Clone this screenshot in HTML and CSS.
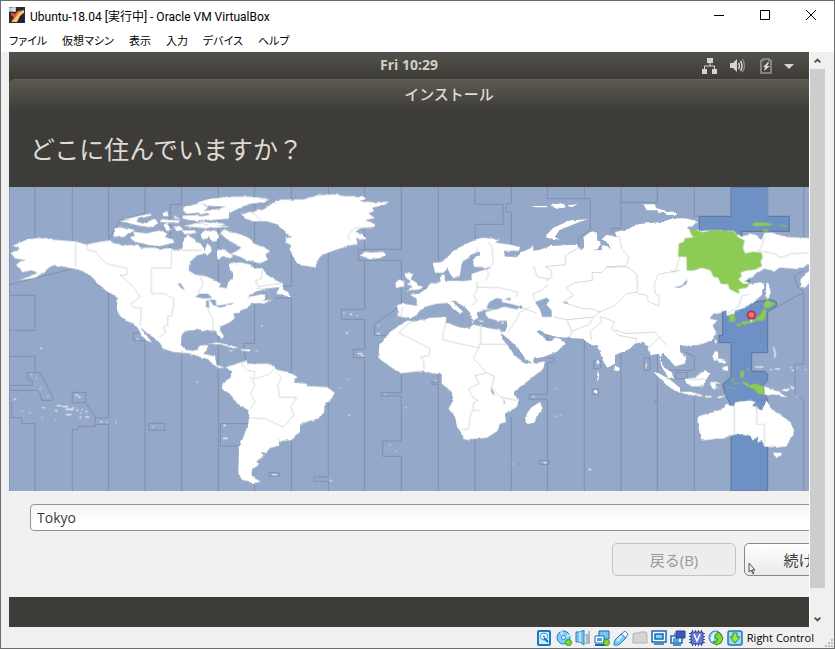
FILE: index.html
```html
<!DOCTYPE html>
<html lang="ja">
<head>
<meta charset="utf-8">
<meta name="viewport" content="width=device-width, initial-scale=1">
<title>Ubuntu-18.04 [実行中] - Oracle VM VirtualBox</title>
<link rel="stylesheet" href="styles.css">
</head>
<body>
<header class="titlebar">
  <svg class="app-icon" viewBox="0 0 16 16" aria-hidden="true"><rect width="16" height="16" fill="#292a38"/><path d="M2 6l4 1 3-3 6-1-3 5-3 1-3 6H2l3-5-3-2z" fill="#df7932"/><path d="M10 6l5-3v3l-4 3-3 6H3l4-5z" fill="#ffc869"/><path d="M12 8l3-2v9h-4z" fill="#202437"/><path d="M2 6l4 1 1 2-2 1-3-2z" fill="#e34c2a"/><path d="M0 0h7v5H0z" fill="#8d99a6"/><path d="M1 1v3m2-3v3m1-3h2v3H4z" stroke="#fff" fill="none"/></svg>
  <h1 class="caption">Ubuntu-18.04 [実行中] - Oracle VM VirtualBox</h1>
  <div class="window-controls">
    <button aria-label="最小化"><svg viewBox="0 0 10 10"><path d="M0 5.500h10"/></svg></button>
    <button aria-label="最大化"><svg viewBox="0 0 10 10"><path d="M.5.5h9v9h-9z"/></svg></button>
    <button aria-label="閉じる"><svg viewBox="0 0 10 10"><path d="M0 0l10 10M10 0L0 10"/></svg></button>
  </div>
</header>
<nav class="menubar">
  <button>ファイル</button><button>仮想マシン</button><button>表示</button><button>入力</button><button>デバイス</button><button>ヘルプ</button>
</nav>
<div class="viewport">
  <main class="guest">
    <div class="topbar">
      <span class="clock">Fri 10:29</span>
      <div class="indicators">
        <svg viewBox="0 0 16 16" aria-hidden="true"><path fill="#d6d4cf" d="M5 0h6v5H5zM0 11h5v5H0zM10 11h5v5h-5z"/><path d="M8 5v3M2.500 11V8h10v3" fill="none" stroke="#d6d4cf"/></svg>
        <svg viewBox="0 0 16 16" aria-hidden="true"><path fill="#d6d4cf" d="M0 5h3l4-4v13l-4-4H0z"/><path fill="none" stroke="#d6d4cf" stroke-width="1.500" d="M8.500 5q2 3 0 6M10.500 3q3 5 0 10"/><path fill="none" stroke="#88867f" stroke-width="1.500" d="M12.500 1q4 7 0 13"/></svg>
        <svg viewBox="0 0 16 16" aria-hidden="true"><path d="M3 2.500h2V1h6v1.500h2V15H3z" fill="none" stroke="#96948d" stroke-width="1.600"/><path d="M10 4L5 9h2l-1 4 6-5H9l2-3z" fill="#dedbd5"/></svg>
        <svg viewBox="0 0 16 16" aria-hidden="true"><path fill="#d6d4cf" d="M3 6h10l-5 5z"/></svg>
      </div>
    </div>
    <section class="installer">
      <h2 class="installer-title">インストール</h2>
      <h3 class="question">どこに住んでいますか？</h3>
      <svg class="map" viewBox="27 0 2640 912" role="img" aria-label="タイムゾーン地図">
        <defs><filter id="coast" x="-1%" y="-1%" width="102%" height="102%"><feTurbulence type="fractalNoise" baseFrequency="0.06" numOctaves="2" seed="4"/><feDisplacementMap in="SourceGraphic" scale="8" xChannelSelector="R" yChannelSelector="G"/></filter></defs>
        <rect x="27" width="2640" height="912" fill="#94a8c9"/>
        <path class="zone" transform="translate(2010)" d="M183 0H293V88H358V133H215V155L250 345 290 340 305 338 320 345 320 357 293 375V497H245V553H285L293 562V580L275 600 293 640V912H183V655L165 620 158 592 183 570V467H147V445H158V375L205 368 235 340 190 160 88 133V88H183Z"/>
        <g class="lines">
          <path d="M28 0V912M105 0V155M105 325V430H27M27 325H105M27 508H105V557H120L158 630V640H126L117 610H27M27 595H97V582L82 575V557H105M27 647H35V692H65V710H105V912M217 0V166M227 166V243L27 293M217 616H257V647H217ZM257 647L286 690V718H235V727H217V912M286 692H326V310L285 290M286 712H326V912M326 0V158L360 100 435 78V0M435 912V461H400V437H430M446 709H494V730H446ZM545 0V52H511V185M545 500V912M655 0V912M764 0V469H730L738 525M764 890V912M874 0V298H845M824 333H874V912M661 710H745M661 710V777H720M808 857H838V868H808Z"/>
          <path d="M985 0V870H942V883H985V912M1094 0V188H1075V220H1094V367H1024V397H1094V487H1060V512H1094V912M1204 0V187H1094M1094 220H1204V355L1123 412V445H1165M1204 560V617H1144V627H1204V762H1148V808H1204V912M1315 0V270M1315 565V586H1295V592H1315V912M1425 0V52H1509V112H1425V155M1425 750V912M1534 0V50H1518V75H1534V180M1534 690V912"/>
          <path d="M1642 0V35H1771V127L1735 155V180M1642 440V513H1663V526H1642V622H1588V637H1642V820H1617V832H1648V820H1642V912M1753 0V35M1753 460V912M1863 0V46H1972V0M1863 46V124H1834V140M1863 500V912M1972 490V912M1781 520H1802V545H1781ZM1777 606H1796V622H1777ZM1932 513H1950V550H1932ZM1963 640H1972V647H1963ZM2083 0V88H2098M2083 508L2055 495M2083 508V550H1990M2083 625V912M2028 557H2063V575H2028ZM2411 0V155M2411 250L2383 268 2393 300 2411 313V532H2385V620L2411 640V912M2411 316L2303 375M2193 0V88M2303 0V88"/>
        </g>
        <g class="land"><g filter="url(#coast)">
          <path d="M30 200L60 185 38 176 80 158 120 152 160 158 225 163 260 172 300 164 330 160 340 168 380 174 414 173 420 182 465 182 480 188 500 183 530 190 548 184 548 165 562 148 580 160 599 168 612 188 625 198 592 205 570 225 566 250 585 262 620 268 640 277 662 290 660 300 680 303 685 285 700 270 698 255 688 245 690 228 720 226 750 232 765 245 788 243 800 263 820 275 847 290 842 300 800 305 765 315 740 332 765 325 795 320 795 337 780 348 755 350 738 365 723 370 715 378 700 379 705 395 685 408 662 419 660 430 672 448 665 456 653 440 645 430 620 432 600 428 555 432 545 445 543 470 555 488 587 492 600 475 626 475 618 490 610 500 645 508 650 535 675 541 692 536 710 530 740 520 742 530 790 530 810 530 830 548 870 557 890 568 882 585 915 590 930 597 982 600 1004 617 995 635 975 650 972 675 958 694 925 703 900 715 900 735 873 760 840 762 833 750 842 775 805 785 801 798 783 795 791 809 770 823 776 835 756 846 755 863 758 870 783 884 760 889 725 878 715 856 717 780 733 742 745 710 748 672 712 650 689 620 665 606 668 589 693 570 693 552 676 540 655 544 645 536 623 516 590 507 575 500 520 495 488 485 478 463 450 445 420 420 434 438 457 467 440 461 425 446 414 423 402 411 375 400 355 382 350 363 353 333 340 324 308 303 287 282 270 264 241 249 200 241 166 234 149 240 136 252 107 272 60 280 35 291 70 275 112 258 95 250 68 256 48 234 60 223 75 219 46 215 35 202Z"/>
          <path d="M345 122L378 122 405 129 370 150 340 149ZM389 151L405 146 398 134 440 139 478 130 500 140 496 150 518 157 524 167 480 177 445 174 430 170 405 165ZM358 102L390 98 415 90 410 104 430 110 465 94 475 111 450 121 415 116ZM370 97L450 80 458 84 405 98ZM487 78L502 72 506 87 490 88ZM483 97L540 100 535 108 480 105ZM490 113L500 108 515 127 500 132ZM520 118L540 117 550 129 530 132ZM520 84L542 96 525 94ZM550 60L600 48 625 60 610 75 570 80 550 73ZM548 86L590 84 625 94 612 101 570 100 548 95ZM550 117L592 108 620 114 690 118 675 122 610 123ZM546 130L585 130 592 136 555 145ZM552 154L565 145 586 158 585 176 570 190 555 187Z"/>
          <path d="M590 47L620 38 680 29 760 29 810 37 780 47 743 52 705 70 687 80 687 95 630 100 590 90 630 83 610 72 650 66 680 59 630 57ZM590 68L610 66 620 79 600 83ZM585 104L640 106 665 108 678 113 640 119ZM601 140L615 130 630 132 624 154 606 158ZM628 132L648 130 658 148 650 162 634 164 626 146ZM662 138L670 127 704 137 730 144 750 155 766 171 790 180 812 192 797 201 804 219 780 229 740 220 716 207 690 201 711 191 724 182 691 163 678 156ZM651 188L672 186 700 208 690 214 668 207 656 218 651 208ZM615 185L622 168 634 181 635 193 620 207ZM828 320L845 291 850 302 865 316 873 330 850 325ZM777 346L796 341 820 334 807 342 790 352Z"/>
          <path d="M725 83L745 75 790 68 820 47 850 38 910 37 950 25 1000 22 1035 27 1090 27 1098 36 1080 42 1120 45 1168 44 1150 56 1118 62 1119 73 1106 79 1125 93 1095 100 1126 108 1120 121 1084 123 1066 134 1090 142 1099 157 1078 158 1068 152 1073 169 1044 178 1005 189 980 199 962 205 944 242 926 238 903 235 886 220 868 189 874 174 858 167 858 153 874 150 855 141 852 129 833 113 800 103 760 103 732 93ZM1080 205L1095 194 1115 197 1148 194 1160 203 1140 213 1109 217 1093 210Z"/>
          <path d="M622 472L650 466 690 474 716 482 700 484 661 472ZM722 486L753 487 750 493 724 491ZM685 490h12l-6 4zM763 490h15l-4 3z"/>
          <g transform="translate(1110)">
            <path d="M85 352L100 350 140 356 140 335 118 322 145 320 170 305 180 290 212 283 209 268 224 262 225 282 250 281 282 282 305 279 304 262 325 253 365 242 312 240 308 217 333 203 327 193 303 204 275 230 270 265 248 275 232 244 220 258 195 258 188 228 215 225 260 185 300 165 340 152 390 157 375 166 422 173 450 180 447 192 402 192 405 208 440 210 455 196 490 178V530L465 515 450 490 420 460 387 433 405 434 412 417 410 402 380 400 350 392 345 375 373 368 330 370 320 382 325 392 310 402 302 380 286 362 263 347 242 340 260 355 280 375 268 380 249 366 235 348 205 350 180 355 150 370 139 385 120 395 95 390 82 386Z"/>
            <path d="M105 403L140 402 180 392 229 390 228 405 265 420 294 426 310 412 350 422 389 429 400 459 431 504 468 530 525 523 520 545 480 577 450 600 432 618 445 640 442 660 405 680 408 705 387 713 385 730 350 753 285 758 272 735 261 720 255 690 235 665 250 640 245 615 215 590 215 560 190 560 160 552 90 559 40 525 25 512 28 472 60 435Z"/>
            <path d="M104 258L130 260 122 276 140 287 144 296 161 299 147 308 108 311 128 299 111 292 122 282 112 276 106 270ZM76 288L86 278 104 280 102 298 78 303ZM-78 435h13l-5 8zM305 400l9 8-8 0zM322 398l22 4-10 3zM388 407l15-4-2 5z"/>
          </g>
          <g transform="translate(1560)">
            <path d="M0 196L35 188 55 190 90 177 150 173 170 174 183 190 194 180 190 150 215 132 230 138 232 157 242 166 234 187 218 190 246 189 243 174 262 177 272 187 266 168 245 157 260 143 290 150 285 135 330 125 350 112 425 105 450 97H480V520L450 520 430 500 420 510 430 540 455 555 462 576 445 572 425 540 415 500 392 505 385 480 370 465 345 470 330 485 285 505 285 530 262 542 248 520 233 475 215 475 187 455 150 453 110 450 75 440 60 428 50 434 78 457 95 462 109 451 137 469 110 495 70 510 20 518 0 480Z"/>
            <path d="M78 145L100 122 150 100 205 97 165 110 118 130 105 150 120 158 82 153ZM60 645L68 661 40 708 23 711 16 704 20 680 35 660ZM285 535L299 546 294 553 283 550ZM400 555L415 558 448 576 480 602V618L440 595ZM370 52L405 52 410 70 380 70ZM405 62L440 72 418 78ZM430 73L465 74 472 83 440 84ZM32 57h50v4H45zM90 54l40-6 8 13-28 5zM144 55l30-4-19 10zM230 520h8v10h-8zM233 547l5 18-4 20-3-10zM222 610h10v7h-10zM375 520l5 18-3 10z"/>
          </g>
          <g transform="translate(2010)">
            <path d="M0 97L40 92 75 100 85 108 50 122 65 131 130 130 190 132 214 149 240 140 262 145 275 157 283 138 305 136 350 150 417 153 450 155V235L417 232 380 246 330 242 310 252 283 245 264 257 249 267 223 282 250 292 264 286 280 285 283 300 275 325 250 345 225 362 195 372 192 384 170 386 169 370 150 375 125 385 120 395 143 400 128 415 141 440 125 460 100 470 60 478 30 475 25 490 48 508 45 530 15 538 0 520Z"/>
            <path d="M82 700L85 688 110 680 150 670 170 650 190 658 200 645 240 640 258 645 245 655 275 670 290 640 300 660 315 676 330 680 360 705 373 730 362 753 350 778 320 782 283 778 276 762 262 767 265 748 248 760 240 745 195 742 175 748 160 755 135 755 122 758 95 760 88 735ZM308 797L335 797 334 806 319 812ZM0 580L25 605 20 612 0 602ZM25 614L60 614 92 622 100 629 55 624ZM48 575L75 572 105 549 120 561 107 580 100 598 65 598 48 588ZM120 585L155 585 134 592 150 607 137 600 131 610 123 597ZM130 493L144 492 145 510 135 524 129 512ZM138 512L165 518 171 528 145 527ZM155 542L172 536 175 551 160 550ZM133 455L142 463 136 471ZM289 286L296 289 303 316 292 337 288 323ZM417 252L392 276 390 300 406 302 420 285ZM283 598L325 610 350 632 310 622 283 627ZM332 610l35-8-17 12zM355 592l20 10-4 3zM105 627h20v4h-20zM140 629l30-4-22 9z"/>
          </g>
        </g></g>
        <g class="borders">
          <path d="M227 166V242M260 174L263 188 288 194 302 214 322 231 382 244V262L360 265 379 280 402 303 420 330 393 350 400 362 425 362 420 415M606 190H514V243H454V320H497L510 331 521 332 520 358 514 388H503V416L490 420 497 437 478 450M600 267L610 291 594 317 612 332M623 365L640 398 638 428M740 520L725 530 740 550 765 553 760 576 805 563 820 550M750 570L765 595 752 620 765 645 750 665M758 693L795 695 850 720 860 710 882 683 872 660 890 631H838L834 592 845 573 828 555M788 245L784 275 766 281 775 298 843 290M770 303L804 308 813 340M760 75L785 105M1048 160L1044 144 1064 122 1120 125"/>
          <path transform="translate(1110)" d="M98 360L92 390M320 285L322 305 312 325 320 345 302 358M320 180L325 205M355 165L366 180 370 230 350 245 356 265 345 282M320 300L390 302 443 315 439 330M480 360L450 375 435 405 412 437M140 402L120 405 86 437 180 485 178 505 153 510 161 523 163 550M230 405L219 435 220 458 250 466 327 482V472H410M332 420V472M327 482L310 513 350 558 315 565 327 590 296 605 310 633 325 640 310 647V670H332M310 670L303 675 295 727H275M350 558L373 567 366 600 390 630 440 640 445 630"/>
          <path transform="translate(1560)" d="M180 180L136 205V233L75 239 94 250 95 270 78 283M40 237L52 270 87 276M85 293L65 310 40 320 43 340M0 360L50 378M140 350L128 345 160 325 140 302 162 288 218 280 216 256 244 257 260 240 322 240 350 260 353 315M260 240L318 236 327 210 304 185 299 150 270 145M353 315L320 320 286 355 240 375 215 365 190 365 135 348M240 375L220 390 140 398 100 390M140 398L155 433 150 450M220 390L208 412 155 433M240 388L244 405 210 432 215 460M240 388L284 405 275 425 295 445 350 455 348 470M353 320L380 325 385 343 416 357 417 325 405 320 403 290 415 262 480 250M283 428L320 440 405 435 418 450 387 482M418 450L440 475"/>
          <path transform="translate(2010)" d="M283 150L275 178 265 192 315 200 330 212 365 200 417 197M170 380L205 360 215 326 237 322M193 658V742M260 650V712H283V778M0 250L15 255 24 225 29 210M57 578L105 576"/>
        </g>
        <g class="water">
          <path d="M532 289l10 0 12 19-8-2zM585 330l14-10 25 0 13 13-25 2zM618 342l8-4 2 25-10-3zM628 338l18 0 4 19-10-2zM646 356l33-4 0 5-20 5zM672 352l30-5-8 6zM742 326l30-8 20-2-30 9z"/>
          <path transform="translate(1110)" d="M352 355L358 345 380 333 398 337 395 345 420 350 454 359 440 367 402 359 378 368 350 366ZM403 336L423 332 420 341ZM363 600L373 620 371 625 363 613ZM400 630L405 653 401 649Z"/>
          <path transform="translate(1560)" d="M45 345L80 332 89 340 79 352 95 370 95 390 67 390 60 368ZM0 355h6v10H0zM133 345h10v4h-10z"/>
          <path transform="translate(2010)" d="M12 301L36 295 52 276 50 291 29 303Z"/>
        </g>
        <g class="specks">
          <path d="M92 562h3M107 573h3M122 603h3M117 609h3M142 629h3M42 636h7M65 673h3M88 678h3M126 662h8M125 692h3M165 700h3M170 656h15M165 671h8M187 659h18M197 667h24M198 683h16M217 662h4M229 670h6M240 678h4M244 668h4M256 674h6M239 691h5M256 690h11M226 624h8M234 630h8M301 704h6M319 706h3M346 706h3M457 720h3M120 484h5M410 456h5M590 585h4M670 715h8M668 754h15M784 417h4M817 863h13M990 881h6M1044 684h6M1030 378h4M1050 382h6M1070 386h4M1072 500h15M1083 506h8M1019 603h3M1043 577h3M1133 416h4M1130 440h10M1155 622h3M1215 662h3M1168 774h3M1188 792h3M1306 581h4M1536 831h3M1597 629h5M1665 605h3M1665 688h4M1680 684h3M1630 827h10M1765 847h8M2265 540h25M2310 548h6M2325 546h15M2370 542h4M2375 550h6M2390 543h3M2415 548h4M2320 480l6 20-3 12M2375 605h4M2390 628h3"/>
        </g>
        <g class="green" transform="translate(2010)">
          <path d="M60 128L77 129 100 136 130 129 190 133 206 152 223 160 218 183 225 200 248 195 274 198 277 211 271 225 276 237 255 247 228 250 210 257 215 267 205 277 218 290 238 291 230 302 205 306 207 320 178 305 175 291 153 290 145 272 131 269 121 249 95 242 70 250 51 250 50 209 25 208 27 170 42 165 45 154 72 151 64 143ZM245 112L255 106 285 107 309 111 300 116 253 118ZM318 113L350 116 348 120 330 117ZM274 127L290 128 298 134 282 133ZM175 386L188 379 196 392 195 403 174 404 180 395ZM285 346L290 338 317 350 298 361 286 365 280 355ZM279 367L288 369 287 392 277 401 260 402 247 407 235 409 210 411 218 403 240 401 257 397 273 380ZM201 409L212 409 210 419 202 419ZM215 412L230 409 226 416ZM213 584L230 586 238 595 253 589 280 598 283 625 261 618 255 608 234 600ZM187 570l5 10-6 3zM210 553l12-2-2 22-9-3zM231 543h5v5h-5zM267 475h7v4h-7zM190 588h18v3h-18zM172 600h12v2h-12zM190 602h5v2h-5z"/>
        </g>
        <g transform="translate(2254 384)"><path d="M-3 10h6v12h-6z" fill="#fff" stroke="#777"/><circle r="12" fill="#ed4651" stroke="#ad1423" stroke-width="3"/><path d="M-7-4h14M-7 2h14" stroke="#ffb2b5" stroke-width="3"/></g>
      </svg>
      <form class="location">
        <input type="text" value="Tokyo" aria-label="都市">
        <div class="actions">
          <button type="button" disabled>戻る(B)</button>
          <button type="button" class="next">続ける</button>
          <svg class="pointer" viewBox="0 0 8 12" aria-hidden="true"><path d="M1 1v9l2-2 2 4 1-1-2-3h3z" fill="#eee" stroke="#555"/></svg>
        </div>
      </form>
    </section>
  </main>
  <div class="scrollbar" aria-hidden="true">
    <svg viewBox="0 0 16 17"><path d="M5 10.500l3-3 3 3"/></svg>
    <div class="track"><div class="thumb"></div></div>
    <svg viewBox="0 0 16 17"><path d="M5 7.500l3 3 3-3"/></svg>
  </div>
</div>
<footer class="statusbar">
  <svg viewBox="0 0 16 16"><rect x="1" y="1" width="12" height="14" rx="1" fill="#c9efff" stroke="#177bc7" stroke-width="2"/><circle cx="7" cy="6.500" r="3.500" fill="#fff" stroke="#408ac3"/><circle cx="7" cy="6.500" r="1" fill="#176eb4"/><path d="M7 8l4 4" stroke="#176eb4" stroke-width="2"/></svg>
  <svg viewBox="0 0 16 16"><circle cx="7.500" cy="7.500" r="6.500" fill="#80cdfa" stroke="#217fc1"/><path d="M7.500 7.500L5 1M7.500 7.500L14 5" stroke="#b9e8ff" stroke-width="2"/><circle cx="7.500" cy="7.500" r="2" fill="#fff" stroke="#217fc1"/><circle cx="12.500" cy="12.500" r="3" fill="#83d830" stroke="#2d9b18"/></svg>
  <svg viewBox="0 0 16 16"><path d="M1 2h4l4-2v15l-4-3H1z" fill="#75c4ef" stroke="#2b82bb"/><path d="M5 2v10" stroke="#fff"/><path d="M10 5h4v8h-4M11 7h3M11 9h3M11 11h3M14 1v3" fill="none" stroke="#9ca7b1" stroke-width="1.500"/></svg>
  <svg viewBox="0 0 16 16"><path d="M5 1h10v8H5z" fill="#70c8f5" stroke="#1b67a7"/><path d="M1 6h9v7H1z" fill="#fff" stroke="#1b67a7"/><path d="M3 8h5v3H3z" fill="#40a3df"/><path d="M1 15h10" stroke="#1b67a7" stroke-width="2"/><circle cx="12.500" cy="12.500" r="3" fill="#83d830" stroke="#2d9b18"/></svg>
  <svg viewBox="0 0 16 16"><path d="M2 10l6-6 5 4-6 6q-3 2-6 1 0-3 1-5z" fill="#7ccaf7" stroke="#357bc1"/><path d="M8 4l4-3 3 3-2 4z" fill="#eef7fd" stroke="#68819a"/><path d="M4 11l5-5" stroke="#d7f4ff" stroke-width="2"/></svg>
  <svg viewBox="0 0 16 16"><path d="M1 13V4l2-1h4l1-1h6l1 2v9z" fill="#d5d5d5" stroke="#b1b1b1"/></svg>
  <svg viewBox="0 0 16 16"><path d="M1 1h14v11H1zM3 14h10" fill="#fff" stroke="#1769ae" stroke-width="1.500"/><path d="M4 4h8v5H4z" fill="#7ed4ff" stroke="#1769ae" stroke-width="1.500"/></svg>
  <svg viewBox="0 0 16 16"><path d="M1 6h11v7H1zM3 15h8" fill="#e8f8ff" stroke="#1769ae" stroke-width="1.500"/><path d="M3 8h6v4H3z" fill="#4ba8e3"/><path d="M6 1h9v7H6z" fill="#3e58af" stroke="#2d408d"/><path d="M4 3h2v3H4z" fill="#6682d1"/></svg>
  <svg viewBox="0 0 16 16"><path d="M0 3.500h16M0 6.500h16M0 9.500h16M0 12.500h16M3.500 0v16M6.500 0v16M9.500 0v16M12.500 0v16" stroke="#3d4fa9"/><rect x="2" y="2" width="12" height="12" rx="1" fill="#6479cf" stroke="#3042a0"/><path d="M5 4l3 7 3-7" fill="none" stroke="#fff" stroke-width="1.500"/></svg>
  <svg viewBox="0 0 16 16"><circle cx="7.500" cy="7.500" r="6.500" fill="#83caf4" stroke="#3b7bb3"/><path d="M3 11Q2 3 8 2l1-1q-5 6-2 11" fill="#e2f6ff"/><path d="M7 5l4-3 4 6-2 5-5 2-3-4 3 1 2-3-3-1z" fill="#84d934" stroke="#348d1d"/></svg>
  <svg viewBox="0 0 16 16"><rect x="1" y="1" width="14" height="14" rx="2" fill="#94dcfa" stroke="#2876aa" stroke-width="1.500"/><path d="M6 3h4v4h3l-5 6-5-6h3z" fill="#9bec43" stroke="#338b22"/></svg>
  <span class="hostkey">Right Control</span>
  <svg class="grip" viewBox="0 0 9 9"><path d="M6 0h2v2H6zM3 3h2v2H3zM6 3h2v2H6zM0 6h2v2H0zM3 6h2v2H3zM6 6h2v2H6z" fill="#bdbdbd"/></svg>
</footer>
</body>
</html>
```

FILE: styles.css
```css
* { box-sizing: border-box; }
body {
  margin: 0;
  height: 100vh;
  display: flex;
  flex-direction: column;
  overflow: hidden;
  border: 1px solid #6d6d6d;
  background: #f0f0f0;
  color: #000;
  font-family: "Open Sans", "Noto Sans CJK JP", sans-serif;
  font-size: 12px;
}
h1, h2, h3 { margin: 0; font-weight: 400; }
button, input { font: inherit; color: inherit; }
svg { display: block; flex: none; }

.titlebar {
  display: flex;
  align-items: center;
  height: 28px;
  flex: none;
  padding-left: 8px;
  background: #fff;
}
.app-icon { width: 16px; height: 16px; }
.caption { margin-left: 5px; font-size: 12px; font-family: Roboto, "Noto Sans CJK JP", sans-serif; white-space: nowrap; }
.window-controls { display: flex; margin-left: auto; }
.window-controls button {
  width: 46px;
  height: 28px;
  padding: 0;
  border: 0;
  background: none;
  display: grid;
  place-items: center;
}
.window-controls svg { width: 10px; height: 10px; fill: none; stroke: #000; }

.menubar {
  display: flex;
  flex: none;
  height: 23px;
  padding-left: 8px;
  gap: 15px;
  background: #fff;
}
.menubar button {
  padding: 0;
  border: 0;
  background: none;
  font-size: 11px;
  line-height: 24px;
  font-feature-settings: "palt";
}

.viewport { display: flex; flex: 1; min-height: 0; padding: 0 9px 0 8px; }
.guest {
  flex: 1;
  min-width: 0;
  overflow: hidden;
  background: #3d3c38;
  color: #dfdbd2;
}
.topbar {
  height: 27px;
  display: flex;
  align-items: center;
  justify-content: center;
  position: relative;
  background: linear-gradient(#53514b, #3d3c38);
}
.clock { font-weight: 700; font-size: 14px; line-height: 18px; padding-bottom: 2px; color: #d2cfc8; }
.indicators { position: absolute; right: 12px; display: flex; gap: 12px; }
.indicators svg { width: 16px; height: 16px; }
.indicators svg:last-child { margin-left: -5px; }

.installer { width: 110%; }
.installer-title {
  height: 30px;
  border-top: 1px solid #686454;
  border-radius: 6px 6px 0 0;
  background: linear-gradient(#5b5951, #3f3e3a);
  text-align: center;
  font-size: 15px;
  line-height: 27px;
  font-weight: 500;
  font-family: "Noto Sans CJK JP", sans-serif;
}
.question {
  height: 78px;
  padding-left: 21px;
  background: #3d3c38;
  font-size: 25px;
  font-weight: 400;
  line-height: 78px;
  font-family: "Noto Sans CJK JP", sans-serif;
}
.map { width: 100%; height: auto; }
.zone { fill: #6e91c5; stroke: #5f7398; stroke-width: 3; }
.lines { fill: none; stroke: #8090ac; stroke-width: 3; }
.land { fill: #fff; filter: drop-shadow(0 0 1px #7f9099); }
.borders { fill: none; stroke: #bcc8c5; stroke-width: 2; }
.water { fill: #94a8c9; }
.specks { fill: none; stroke: #edf2ef; stroke-width: 4; }
.green { fill: #8ccc55; stroke: #8ba777; stroke-width: 1; }

.location { background: #f2f1ef; padding: 13px 21px 21px; }
.location input {
  display: block;
  width: 100%;
  height: 27px;
  padding: 0 6px;
  border: 1px solid #949390;
  border-radius: 4px;
  background: linear-gradient(#f3f3f3, #fff 60%);
  color: #3c3c3c;
  font-size: 14px;
}
.actions { position: relative; display: flex; justify-content: flex-end; gap: 8px; margin-top: 12px; }
.actions button {
  width: 124px;
  height: 33px;
  padding: 0;
  border: 1px solid #888784;
  border-radius: 5px;
  background: linear-gradient(#fff, #eaeae9);
  color: #3c3c3c;
  font-size: 15px;
}
.actions button:disabled { color: #9b9a97; background: #ededed; border-color: #c3c2c0; }
.pointer { position: absolute; right: 112px; top: 19px; width: 8px; height: 12px; }

.scrollbar { width: 16px; flex: none; display: flex; flex-direction: column; border-left: 1px solid #fff; }
.scrollbar svg { width: 15px; height: 17px; fill: none; stroke: #505050; stroke-width: 2; }
.track { flex: 1; }
.thumb { height: 96%; background: #cdcdcd; }

.statusbar {
  flex: none;
  height: 21px;
  display: flex;
  align-items: center;
  justify-content: flex-end;
  gap: 3px;
}
.statusbar svg { width: 16px; height: 16px; }
.hostkey { margin-left: 1px; font-size: 11px; white-space: nowrap; }
.statusbar .grip { width: 9px; height: 9px; align-self: flex-end; margin-left: 8px; }
```
